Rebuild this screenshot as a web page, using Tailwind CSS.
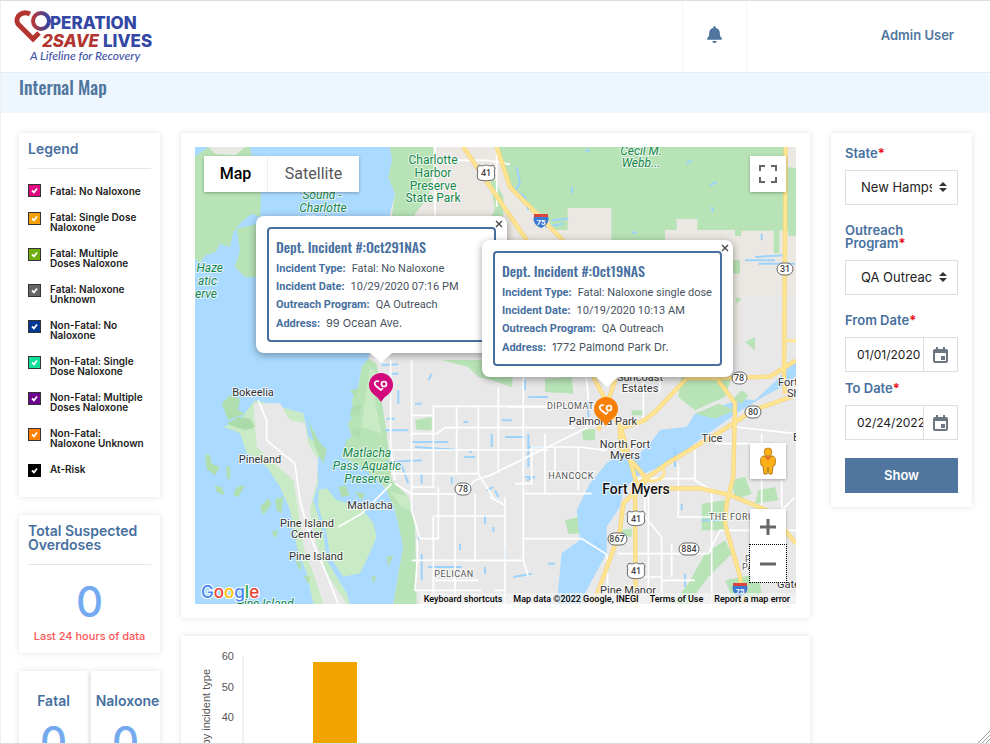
<!DOCTYPE html>
<html lang="en">
<head>
    <meta charset="UTF-8">
    <meta name="viewport" content="width=device-width, initial-scale=1.0">
    <title>Internal Map - Operation 2 Save Lives</title>
    <script src="https://cdn.jsdelivr.net/npm/@tailwindcss/browser@4"></script>
</head>
<body class="h-screen overflow-hidden bg-white font-[Inter,sans-serif] text-[#222]">
<div class="relative flex h-full flex-col overflow-hidden border-y border-l border-[#dcdcdc] border-l-[#f0f0f0]">
    <!-- Header -->
    <header class="flex h-[72px] shrink-0 items-stretch border-b border-[#e3ebf5]">
        <a href="#" class="block grow" aria-label="Operation 2 Save Lives">
            <svg class="h-[70px] w-[170px]" viewBox="0 0 170 70" font-family="Inter, sans-serif">
                <defs>
                    <linearGradient id="ring" x1="0" x2="1"><stop offset="0" stop-color="#b5383b"/><stop offset="1" stop-color="#3445a3"/></linearGradient>
                </defs>
                <path d="M29 13C21 9 13 16 17 23L32 38L38 32" fill="none" stroke="#b23530" stroke-width="5"/>
                <circle cx="40" cy="20" r="8" fill="none" stroke="url(#ring)" stroke-width="4"/>
                <text x="49" y="28" font-size="17" font-weight="800" fill="#3347a5">PERATION</text>
                <text x="41" y="46" font-size="17" font-weight="800" font-style="italic" fill="#b23530">2SAVE</text>
                <text x="102" y="46" font-size="17" font-weight="800" fill="#3347a5">LIVES</text>
                <text x="29" y="59" font-size="12" font-style="italic" font-weight="500" font-family="Lato, sans-serif" fill="#3f53a8">A Lifeline for Recovery</text>
            </svg>
        </a>
        <button class="flex w-[65px] items-center justify-center border-x border-[#f6f6f6] pb-1" aria-label="Notifications">
            <svg class="h-[17px] w-[15px]" viewBox="0 0 448 512" fill="#50769f"><path d="M224 512c35 0 64-29 64-64H160c0 35 29 64 64 64zm215-150c-19-21-55-52-55-154 0-78-54-140-128-155V32a32 32 0 0 0-64 0v21C118 68 64 130 64 208c0 102-36 133-55 154-6 6-9 14-9 22 0 16 13 32 32 32h384c19 0 32-16 32-32 0-8-3-16-9-22z"/></svg>
        </button>
        <div class="flex w-[243px] items-center justify-end pr-9 pb-[2px]">
            <a href="#" class="text-[13px] font-semibold text-[#50769f]">Admin User</a>
        </div>
    </header>

    <div class="h-10 shrink-0 bg-[#eef6fe] pl-[18px]">
        <h1 class="font-['Oswald','Liberation_Sans_Narrow','Roboto',sans-serif] text-[18px] leading-[29px] font-medium text-[#50769f]">Internal Map</h1>
    </div>

    <main class="grid grow grid-cols-[141px_1fr_141px] items-start gap-[21px] pt-5 pr-[18px] pl-[18px]">
        <!-- Left column -->
        <div class="flex flex-col gap-[18px]">
            <section class="h-[364px] bg-white px-[9px] pt-[7px] shadow-[0_0_6px_rgba(0,0,0,0.12)]">
                <h2 class="border-b border-[#e6e6e6] pb-[10px] text-[14px] leading-[18px] font-semibold text-[#47709f]">Legend</h2>
                <div class="mt-[15px] flex flex-col gap-4 text-[10px] leading-[10px] font-semibold">
                    <label class="flex gap-[9px]"><span class="relative h-[10px] w-[13px] shrink-0"><input type="checkbox" checked class="block size-[13px] appearance-none border border-[#333] bg-[#e2087f]"><svg class="pointer-events-none absolute top-[3px] left-[3px] size-[7px]" viewBox="0 0 7 7"><path d="M1 3.5L3 5.5L6 1.5" fill="none" stroke="#fff" stroke-width="1.8"/></svg></span><span class="pt-[2px] whitespace-nowrap">Fatal: No Naloxone</span></label>
                    <label class="flex gap-[9px]"><span class="relative h-[13px] w-[13px] shrink-0"><input type="checkbox" checked class="block size-[13px] appearance-none border border-[#333] bg-[#f5a000]"><svg class="pointer-events-none absolute top-[3px] left-[3px] size-[7px]" viewBox="0 0 7 7"><path d="M1 3.5L3 5.5L6 1.5" fill="none" stroke="#fff" stroke-width="1.8"/></svg></span><span class="whitespace-nowrap">Fatal: Single Dose<br>Naloxone</span></label>
                    <label class="flex gap-[9px]"><span class="relative h-[13px] w-[13px] shrink-0"><input type="checkbox" checked class="block size-[13px] appearance-none border border-[#333] bg-[#6fae0c]"><svg class="pointer-events-none absolute top-[3px] left-[3px] size-[7px]" viewBox="0 0 7 7"><path d="M1 3.5L3 5.5L6 1.5" fill="none" stroke="#fff" stroke-width="1.8"/></svg></span><span class="whitespace-nowrap">Fatal: Multiple<br>Doses Naloxone</span></label>
                    <label class="flex gap-[9px]"><span class="relative h-[13px] w-[13px] shrink-0"><input type="checkbox" checked class="block size-[13px] appearance-none border border-[#333] bg-[#666]"><svg class="pointer-events-none absolute top-[3px] left-[3px] size-[7px]" viewBox="0 0 7 7"><path d="M1 3.5L3 5.5L6 1.5" fill="none" stroke="#fff" stroke-width="1.8"/></svg></span><span class="whitespace-nowrap">Fatal: Naloxone<br>Unknown</span></label>
                    <label class="flex gap-[9px]"><span class="relative h-[13px] w-[13px] shrink-0"><input type="checkbox" checked class="block size-[13px] appearance-none border border-[#333] bg-[#003893]"><svg class="pointer-events-none absolute top-[3px] left-[3px] size-[7px]" viewBox="0 0 7 7"><path d="M1 3.5L3 5.5L6 1.5" fill="none" stroke="#fff" stroke-width="1.8"/></svg></span><span class="whitespace-nowrap">Non-Fatal: No<br>Naloxone</span></label>
                    <label class="flex gap-[9px]"><span class="relative h-[13px] w-[13px] shrink-0"><input type="checkbox" checked class="block size-[13px] appearance-none border border-[#333] bg-[#0fdf97]"><svg class="pointer-events-none absolute top-[3px] left-[3px] size-[7px]" viewBox="0 0 7 7"><path d="M1 3.5L3 5.5L6 1.5" fill="none" stroke="#fff" stroke-width="1.8"/></svg></span><span class="whitespace-nowrap">Non-Fatal: Single<br>Dose Naloxone</span></label>
                    <label class="flex gap-[9px]"><span class="relative h-[13px] w-[13px] shrink-0"><input type="checkbox" checked class="block size-[13px] appearance-none border border-[#333] bg-[#6f0391]"><svg class="pointer-events-none absolute top-[3px] left-[3px] size-[7px]" viewBox="0 0 7 7"><path d="M1 3.5L3 5.5L6 1.5" fill="none" stroke="#fff" stroke-width="1.8"/></svg></span><span class="whitespace-nowrap">Non-Fatal: Multiple<br>Doses Naloxone</span></label>
                    <label class="flex gap-[9px]"><span class="relative h-[13px] w-[13px] shrink-0"><input type="checkbox" checked class="block size-[13px] appearance-none border border-[#333] bg-[#ff8000]"><svg class="pointer-events-none absolute top-[3px] left-[3px] size-[7px]" viewBox="0 0 7 7"><path d="M1 3.5L3 5.5L6 1.5" fill="none" stroke="#fff" stroke-width="1.8"/></svg></span><span class="whitespace-nowrap">Non-Fatal:<br>Naloxone Unknown</span></label>
                    <label class="flex gap-[9px]"><span class="relative h-[13px] w-[13px] shrink-0"><input type="checkbox" checked class="block size-[13px] appearance-none border border-black bg-black"><svg class="pointer-events-none absolute top-[3px] left-[3px] size-[7px]" viewBox="0 0 7 7"><path d="M1 3.5L3 5.5L6 1.5" fill="none" stroke="#fff" stroke-width="1.8"/></svg></span><span class="whitespace-nowrap">At-Risk</span></label>
                </div>
            </section>

            <section class="h-[138px] bg-white px-[9px] pt-[9px] text-center shadow-[0_0_6px_rgba(0,0,0,0.12)]">
                <h2 class="border-b border-[#e6e6e6] pb-3 text-left text-[14px] leading-[14px] font-semibold text-[#47709f]">Total Suspected Overdoses</h2>
                <p class="mt-4 text-[42px] leading-[42px] font-medium text-[#74aaf0]">0</p>
                <p class="mt-[6px] text-[11px] leading-[14px] font-medium whitespace-nowrap text-[#fb5558]">Last 24 hours of data</p>
            </section>

            <div class="grid grid-cols-2 gap-[3px] text-center">
                <section class="h-[138px] bg-white pt-[21px] shadow-[0_0_6px_rgba(0,0,0,0.12)]">
                    <h2 class="text-[14px] leading-[18px] font-semibold text-[#47709f]">Fatal</h2>
                    <p class="mt-[11px] text-[42px] leading-[42px] font-medium text-[#74aaf0]">0</p>
                </section>
                <section class="h-[138px] bg-white pt-[21px] shadow-[0_0_6px_rgba(0,0,0,0.12)]">
                    <h2 class="pl-1 text-[14px] leading-[18px] font-semibold text-[#47709f]">Naloxone</h2>
                    <p class="mt-[11px] text-[42px] leading-[42px] font-medium text-[#74aaf0]">0</p>
                </section>
            </div>
        </div>

        <!-- Map and chart -->
        <div class="flex min-w-0 flex-col gap-[18px]">
            <section class="bg-white p-[14px] shadow-[0_0_6px_rgba(0,0,0,0.12)]">
                <div class="relative h-[457px] overflow-hidden bg-[#e8e8e8] font-[Roboto,sans-serif]">
                    <!-- Terrain and roads -->
                    <svg class="absolute inset-0 size-full" viewBox="0 0 1803 1371" preserveAspectRatio="xMinYMin slice">
                        <rect width="1803" height="1371" fill="#e8e8e8"/>
                        <path d="M640 0H1803V450H1640V600H880V300H640Z" fill="#ebe8e3"/>
                        <!-- sea -->
                        <path d="M0 0H585L592 40L580 90L600 140L585 200L560 400L520 640L500 660L490 720L470 760L480 800L460 830L470 870L455 900L490 940L540 990L575 1030L590 1060L610 1130L625 1200L610 1280L595 1371H0Z" fill="#aadaff"/>
                        <!-- shoreline preserves -->
                        <g fill="#b7e3b6">
                            <path d="M585 0H715V60L700 150L660 200L640 270H560L590 210L600 140L580 90L592 40Z"/>
                            <path d="M520 635L545 650L560 760L575 860L590 1000L640 1050L660 1130L665 1371H595L610 1280L625 1200L600 1090L570 1020L500 960L440 930L455 880L470 870L458 830L480 800L470 760L490 720L500 660Z"/>
                            <path d="M0 30L40 0H165L180 70L198 130L196 210L170 200L140 225L115 255L105 300L75 290L62 315L30 325L15 350L0 335Z"/>
                            <path d="M125 245L190 230V390L150 390L120 360L135 310Z"/>
                            <path d="M905 0L945 120L1060 220L1080 249H975V249H1118V183H1249V280H1410V249H1445V216H1507V249H1620V267H1638V251H1736V319H1753V251H1780V267H1803V64L1775 60V0Z"/>
                            <path d="M740 639H960L950 720L890 700L850 690L820 660ZM1050 695L1130 690L1135 740L1050 735ZM660 820L710 810V850L665 848ZM1460 680L1540 665L1610 690L1590 750L1500 790L1450 750ZM1520 1070L1590 1060V1150H1520ZM1480 1310L1530 1220L1590 1180L1610 1220L1540 1290L1480 1371H1430ZM1110 1120L1150 1110L1155 1160H1120ZM1690 1030L1740 1020L1750 1060L1680 1070ZM1160 850L1200 845V880H1165ZM1310 790H1345V805H1310ZM1270 1150L1310 1145V1170L1270 1165ZM1610 1000L1650 990L1670 1040L1620 1060Z"/>
                            <path d="M880 60L925 150V240H870L900 190ZM1610 340H1635V380L1615 380ZM1620 450L1640 455L1625 470ZM1650 585L1680 570V610ZM1590 1300L1690 1280L1700 1340L1620 1371Z"/>
                        </g>
                        <path d="M40 0H150L120 25L60 20Z" fill="#e8e8e3"/>
                        <path d="M525 660L545 680L540 760L560 860L500 840L510 760Z" fill="#c8eac5"/>
                        <path d="M585 1033L640 1050L650 1095L620 1080Z" fill="#c8eac5"/>
                        <!-- islands -->
                        <path d="M370 1029L395 1024L425 1059L495 1079L535 1129L545 1169L515 1239L495 1279L445 1289L405 1229L395 1159L370 1079Z" fill="#c8eac5"/>
                        <path d="M85 839L130 825L180 760L255 779L325 799L340 869L385 909L365 939L370 1009L355 1059L385 1159L395 1239L455 1339L465 1371H355L335 1279L305 1199L285 1089L255 1019L215 959L155 919L135 859Z" fill="#c8eac5"/>
                        <path d="M95 830L130 810L165 815L180 840L150 850Z" fill="#aadba9"/>
                        <path d="M175 769L255 769L285 819L330 829L340 889L370 939L365 1009L345 1089L355 1159L395 1279L455 1371H385L355 1279L325 1199L310 1089L295 999L225 939L185 899Z" fill="#e8e8e8"/>
                        <g fill="#b0deae">
                            <path d="M80 770L105 745L135 755L130 790L150 800L100 820ZM30 920L45 925L50 950L75 960L60 985L35 965ZM95 955L105 960V1000L95 990ZM60 1015L80 1020L90 1045L65 1035ZM125 1020L150 1015L130 1050L115 1045ZM195 1080L220 1055L230 1070L205 1105ZM240 1055L265 1050L260 1100L245 1090ZM230 1155L250 1150L240 1175ZM340 820L365 870L380 895L395 905L385 950L360 900ZM575 1230L595 1225L580 1260ZM530 1290L545 1285L535 1310ZM470 780L500 770L495 800L465 810ZM475 840L500 850L490 875L470 860ZM465 730L490 725L480 750Z"/>
                            <path d="M430 1020L450 1015L465 1045L440 1050ZM480 1035L510 1040L500 1060ZM325 1285L345 1290L340 1310ZM300 1235L320 1250L315 1275Z"/>
                        </g>
                        <!-- river -->
                        <path d="M1085 1371L1100 1219L1155 1179L1145 1089L1185 1009L1235 949L1275 919L1325 929L1365 889L1395 849L1475 839L1500 800L1585 775L1640 755L1680 760L1745 699L1803 640V689L1760 720L1705 749L1625 799L1525 869L1475 909L1395 959L1325 989L1285 1029L1275 1079L1235 1139V1219L1175 1329L1160 1371Z" fill="#aadaff"/>
                        <path d="M1500 800L1570 770L1620 790L1560 815ZM1610 760L1640 730L1660 745L1640 770Z" fill="#b7e3b6"/>
                        <!-- ponds and canals -->
                        <g stroke="#9dd3fb" stroke-width="6" fill="none">
                            <path d="M965 60L975 110L960 130L990 150L1000 190M1070 220L1120 215M1050 240L1105 230M1650 340H1740M1680 330L1770 325M1690 350H1800M1700 260V280M1545 115L1565 105M1475 50L1490 40M1310 255L1325 258M1170 10L1185 12M1550 180L1555 195M1130 120L1132 140"/>
                            <path d="M560 655L610 652M585 680H610M610 730V770M660 770H680M575 815H600M570 850H640M650 885H760M660 900L780 908M575 945L680 940M590 960L620 955L640 1010M680 980V1010M770 990V1010M805 825H820M808 930H840M822 915H830M870 1105V1130M875 1030L895 1020M795 1190V1210M672 1160V1180M680 1220V1300M700 1260H800M870 1260V1280M895 1140V1155M700 700L710 680M890 860V900M920 820H950M990 700V730M1000 900H1050M990 990H1020L995 1000M1000 750H1060M900 1030L910 1050M930 870H990M1000 860V960M1460 1070V1090M1470 1280V1320M1440 900V960M1520 1120H1570M1180 760V810M1200 1180L1215 1200M1060 1250H1080M930 1200V1240M955 1290L1010 1280"/>
                        </g>
                        <!-- local streets -->
                        <g stroke="#fff" stroke-width="5" fill="none">
                            <path d="M720 0V270M720 40H880L945 52M905 10V180"/>
                            <path d="M587 640V900L600 1000M650 640V1090L675 1175H730V1020M650 805H715V778H1180M650 860H725L750 842H1140M587 909H1060M587 980H850M715 778V1020H650M600 1010L650 1040L800 1041L840 1000L900 980M785 778V980M850 778V980L900 1060M910 720V980M985 640V1240M720 1107H930M840 1040V1240M780 1040V1371M715 1107V1371M930 1050V1371M650 1240H900M667 1175V1240L660 1330H860M985 1040H1190M885 1050L930 1075V1371M720 1300H850M900 1330H930M985 1175H1160L1235 1222M885 1240H985L1000 1290M1050 1040V860M1150 900V1030"/>
                            <path d="M590 1010L560 1040L500 1100L430 1140M190 760L215 820V880L300 950L315 1060L330 1115L350 1180L390 1270L430 1371"/>
                            <path d="M885 985L1180 840M940 780H1120M1170 640L1180 760L1240 840M1350 690H1270M1345 690V830M1395 640V730M1350 1030V1110L1400 1170V1371M1360 1030V1340M1320 995H1500M1450 950V1110H1700M1500 890V1000L1550 1030V1371M1270 1220H1540L1575 1150H1803M1400 1300H1500M1620 840L1803 860M1560 890H1700M1700 860V1130M1760 1000V1150M1430 1190V1290M1240 1371L1235 1222M1800 1050L1760 1090M960 1010H1010V900H1150L1235 910M1080 1000V900M1320 1290H1400"/>
                        </g>
                        <!-- highways -->
                        <g fill="none" stroke-linejoin="round">
                            <g stroke="#f6d37a" stroke-width="13">
                                <path d="M905 0L945 120L1100 275L1260 700L1210 850M805 0L995 280M1772 0L1767 700L1770 740M1195 690L1280 850L1325 1010M1275 845L1345 822L1385 790L1475 694H1565L1725 689L1803 640M1325 1015L1415 950L1575 855L1675 790L1803 744M1565 694L1620 769L1615 989L1595 1069L1590 1129L1635 1289L1645 1371M1370 1024H1515L1605 1044L1725 1094L1803 1190M1320 1029L1322 1371M1355 999L1285 1069L1275 1149L1255 1209L1195 1371M1275 840V900L1350 990"/>
                            </g>
                            <g stroke="#ffe591" stroke-width="9">
                                <path d="M905 0L945 120L1100 275L1260 700L1210 850M805 0L995 280M1772 0L1767 700L1770 740M1195 690L1280 850L1325 1010M1275 845L1345 822L1385 790L1475 694H1565L1725 689L1803 640M1325 1015L1415 950L1575 855L1675 790L1803 744M1565 694L1620 769L1615 989L1595 1069L1590 1129L1635 1289L1645 1371M1370 1024H1515L1605 1044L1725 1094L1803 1190M1320 1029L1322 1371M1355 999L1285 1069L1275 1149L1255 1209L1195 1371M1275 840V900L1350 990"/>
                            </g>
                            <path d="M1350 1000C1400 1010 1420 980 1400 960M1767 581H1803" stroke="#ffe591" stroke-width="9"/>
                        </g>
                    </svg>

                    <!-- Labels, shields and pins -->
                    <svg class="absolute inset-0 size-full" viewBox="0 0 601 457" preserveAspectRatio="xMinYMin slice" font-family="Roboto, sans-serif" font-size="11" text-anchor="middle">
                        <g fill="#16874a" stroke="#fff" stroke-width="2" stroke-opacity="0.7" paint-order="stroke" font-size="12">
                            <text x="238" y="17">Charlotte</text><text x="238" y="30">Harbor</text><text x="238" y="43">Preserve</text><text x="238" y="55">State Park</text>
                            <g font-style="italic">
                                <text x="127" y="52">Sound -</text><text x="128" y="65">Charlotte</text><text x="128" y="78">Harbor</text>
                                <g text-anchor="end"><text x="28" y="125">Haze</text><text x="22" y="138">atic</text><text x="22" y="151">erve</text></g>
                                <text x="446" y="8">Cecil M.</text><text x="446" y="20">Webb...</text>
                                <text x="172" y="310">Matlacha</text><text x="172" y="323">Pass Aquatic</text><text x="172" y="336">Preserve</text>
                                <text x="70" y="461">Pine Island</text>
                            </g>
                        </g>
                        <g fill="#333" stroke="#fff" stroke-width="2" stroke-opacity="0.8" paint-order="stroke">
                            <text x="58" y="249">Bokeelia</text>
                            <text x="65" y="316">Pineland</text>
                            <text x="175" y="362">Matlacha</text>
                            <text x="112" y="380">Pine Island</text><text x="112" y="391">Center</text>
                            <text x="121" y="413">Pine Island</text>
                            <text x="445" y="234">Suncoast</text><text x="445" y="245">Estates</text>
                            <text x="408" y="278">Palmona Park</text>
                            <text x="430" y="301">North Fort</text><text x="430" y="312">Myers</text>
                            <text x="517" y="295">Tice</text>
                            <text x="433" y="447">Pine Manor</text>
                            <g text-anchor="start"><text x="583" y="239">Fort</text><text x="592" y="250">Sh</text><text x="598" y="294">E</text><text x="582" y="441">Gate</text></g>
                            <text x="441" y="347" font-size="14" font-weight="500" fill="#111">Fort Myers</text>
                            <g class="tracking-wider" font-size="9" fill="#555">
                                <text x="259" y="430">PELICAN</text><text x="376" y="332">HANCOCK</text>
                                <g text-anchor="start"><text x="352" y="262">DIPLOMAT</text><text x="514" y="373">THE FORU</text><text x="550" y="415">P</text><text x="547" y="423">PA</text></g>
                            </g>
                        </g>
                        <g fill="#fff" stroke="#666">
                            <path d="M284 18C287 20 289 18 291 18C293 18 295 20 298 18L300 21C298 25 301 28 299 32C297 34 293 33 291 34C289 33 285 34 283 32C281 28 284 25 282 21Z"/>
                            <path d="M434 364C437 366 439 364 441 364C443 364 445 366 448 364L450 367C448 371 451 373 449 376C447 379 443 378 441 379C439 378 435 379 433 376C431 373 434 371 432 367Z"/>
                            <path d="M434 416C437 418 439 416 441 416C443 416 445 418 448 416L450 419C448 423 451 426 449 429C447 432 443 431 441 432C439 431 435 432 433 429C431 426 434 423 432 419Z"/>
                            <rect x="582" y="116" width="16" height="12" rx="6"/>
                            <rect x="260" y="336" width="16" height="12" rx="6"/>
                            <rect x="537" y="225" width="15" height="12" rx="6"/>
                            <rect x="550" y="259" width="16" height="12" rx="6"/>
                            <rect x="413" y="386" width="19" height="12" rx="6"/>
                            <rect x="484" y="396" width="20" height="12" rx="6"/>
                        </g>
                        <g fill="#444" font-size="9" font-weight="500">
                            <text x="291" y="29">41</text><text x="441" y="375">41</text><text x="441" y="427">41</text>
                            <text x="590" y="125">31</text><text x="268" y="345">78</text><text x="544" y="234">78</text><text x="558" y="268">80</text><text x="422" y="395">867</text><text x="494" y="405">884</text>
                        </g>
                        <path d="M339 69H353C355 76 350 79 346 81C342 79 337 76 339 69Z" fill="#3b78d0"/><path d="M339 67H353V70H339Z" fill="#d9453c"/>
                        <path d="M538 438H552C554 445 549 448 545 450C541 448 536 445 538 438Z" fill="#3b78d0"/><path d="M538 436H552V439H538Z" fill="#d9453c"/>
                        <g fill="#fff" font-size="8" font-weight="700"><text x="346" y="78">75</text><text x="545" y="447">75</text></g>
                        <g stroke-linejoin="round">
                            <path d="M186 226A12 12 0 0 1 198 238C198 245 192 248 189 251L186 255L183 251C180 248 174 245 174 238A12 12 0 0 1 186 226Z" fill="#d20a7c"/>
                            <path d="M184 234.500C181 233 178 236 181 239L186 243L188 241" fill="none" stroke="#fff" stroke-width="1.700"/><circle cx="189" cy="237" r="2.500" fill="none" stroke="#fff" stroke-width="1.700"/>
                            <path d="M411 250A12 12 0 0 1 423 262C423 269 417 272 414 275L411 279L408 275C405 272 399 269 399 262A12 12 0 0 1 411 250Z" fill="#f98006"/>
                            <path d="M409 258.500C406 257 403 260 406 263L411 267L413 265" fill="none" stroke="#fff" stroke-width="1.700"/><circle cx="414" cy="261" r="2.500" fill="none" stroke="#fff" stroke-width="1.700"/>
                        </g>
                        <text x="6" y="451" text-anchor="start" font-family="Inter, sans-serif" font-size="17" font-weight="500" stroke="#fff" stroke-width="2" paint-order="stroke"><tspan fill="#4285f4">G</tspan><tspan fill="#ea4335">o</tspan><tspan fill="#fbbc05">o</tspan><tspan fill="#4285f4">g</tspan><tspan fill="#34a853">l</tspan><tspan fill="#ea4335">e</tspan></text>
                    </svg>

                    <!-- Info windows -->
                    <div class="absolute top-[69px] left-[61px] w-[251px] rounded-lg bg-white p-[11px] shadow-[0_2px_7px_1px_rgba(0,0,0,0.3)]">
                        <div class="h-[115px] rounded border-2 border-[#47709f] px-[7px] pt-2 text-[11px] leading-[18px] whitespace-nowrap text-[#47525e]">
                            <h3 class="mb-[3px] font-['Oswald','Liberation_Sans_Narrow','Roboto',sans-serif] text-[14px] leading-[20px] font-medium text-[#47709f]">Dept. Incident #:Oct291NAS</h3>
                            <p><b class="mr-[6px] font-bold text-[#47709f]">Incident Type:</b>Fatal: No Naloxone</p>
                            <p><b class="mr-[6px] font-bold text-[#47709f]">Incident Date:</b>10/29/2020 07:16 PM</p>
                            <p><b class="mr-[6px] font-bold text-[#47709f]">Outreach Program:</b>QA Outreach</p>
                            <p><b class="mr-[6px] font-bold text-[#47709f]">Address:</b><span class="font-[Inter,sans-serif]">99 Ocean Ave.</span></p>
                        </div>
                        <button class="absolute top-[4px] right-[4px] size-2" aria-label="Close"><svg viewBox="0 0 8 8"><path d="M1 1L7 7M7 1L1 7" stroke="#444" stroke-width="1.3"/></svg></button>
                        <svg class="absolute top-full left-[114px] h-[10px] w-[22px]" viewBox="0 0 22 10"><path d="M0 0H22L11 10Z" fill="#fff"/></svg>
                    </div>
                    <div class="absolute top-[93px] left-[287px] w-[251px] rounded-lg bg-white p-[11px] shadow-[0_2px_7px_1px_rgba(0,0,0,0.3)]">
                        <div class="h-[115px] rounded border-2 border-[#47709f] px-[7px] pt-2 text-[11px] leading-[18px] whitespace-nowrap text-[#47525e]">
                            <h3 class="mb-[3px] font-['Oswald','Liberation_Sans_Narrow','Roboto',sans-serif] text-[14px] leading-[20px] font-medium text-[#47709f]">Dept. Incident #:Oct19NAS</h3>
                            <p><b class="mr-[6px] font-bold text-[#47709f]">Incident Type:</b>Fatal: Naloxone single dose</p>
                            <p><b class="mr-[6px] font-bold text-[#47709f]">Incident Date:</b>10/19/2020 10:13 AM</p>
                            <p><b class="mr-[6px] font-bold text-[#47709f]">Outreach Program:</b>QA Outreach</p>
                            <p><b class="mr-[6px] font-bold text-[#47709f]">Address:</b><span class="font-[Inter,sans-serif]">1772 Palmond Park Dr.</span></p>
                        </div>
                        <button class="absolute top-[4px] right-[4px] size-2" aria-label="Close"><svg viewBox="0 0 8 8"><path d="M1 1L7 7M7 1L1 7" stroke="#444" stroke-width="1.3"/></svg></button>
                        <svg class="absolute top-full left-[114px] h-[10px] w-[22px]" viewBox="0 0 22 10"><path d="M0 0H22L11 10Z" fill="#fff"/></svg>
                    </div>

                    <!-- Map controls -->
                    <div class="absolute top-[9px] left-[9px] flex h-9 bg-white text-[16px] shadow-[0_1px_3px_rgba(0,0,0,0.3)]">
                        <button class="w-[64px] border-r border-[#eee] font-medium text-black">Map</button>
                        <button class="w-[91px] text-[#565656]">Satellite</button>
                    </div>
                    <button class="absolute top-[9px] right-[10px] flex size-9 items-center justify-center bg-white shadow-[0_1px_3px_rgba(0,0,0,0.3)]" aria-label="Toggle fullscreen view">
                        <svg class="size-[18px]" viewBox="0 0 18 18" fill="#666"><path d="M0 0h6v2H2v4H0zM12 0h6v6h-2V2h-4zM0 12h2v4h4v2H0zM16 12h2v6h-6v-2h4z"/></svg>
                    </button>
                    <div class="absolute right-[10px] bottom-[22px] flex flex-col">
                        <button class="mb-[30px] flex size-9 items-center justify-center bg-white shadow-[0_1px_3px_rgba(0,0,0,0.3)]" aria-label="Street View">
                            <svg class="h-[28px] w-4" viewBox="0 0 16 28"><path d="M4 9H12C15 9 16 12 15 18L13 19L12 27H9L8 20L7 27H4L3 19L1 18C0 12 1 9 4 9Z" fill="#fbb016" stroke="#b87d1b"/><circle cx="8" cy="5" r="4" fill="#fbb016" stroke="#c98c20"/><path d="M4 9H12L8 14Z" fill="#e0792a"/></svg>
                        </button>
                        <button class="flex size-9 items-center justify-center bg-white shadow-[0_1px_3px_rgba(0,0,0,0.3)]" aria-label="Zoom in">
                            <svg class="size-[18px]" viewBox="0 0 18 18"><path d="M1 9H17M9 1V17" stroke="#666" stroke-width="3"/></svg>
                        </button>
                        <button class="flex h-[37px] w-9 items-center justify-center bg-white outline-1 outline-dotted outline-black" aria-label="Zoom out">
                            <svg class="size-[18px]" viewBox="0 0 18 18"><path d="M1 9H17" stroke="#666" stroke-width="3"/></svg>
                        </button>
                    </div>
                    <div class="absolute right-0 bottom-0 flex h-[11px] gap-[11px] bg-[#f5f5f5]/70 pr-[6px] pl-1 text-[9px] leading-[12px] font-medium whitespace-nowrap text-black">
                        <button>Keyboard shortcuts</button>
                        <span>Map data ©2022 Google, INEGI</span>
                        <a href="#">Terms of Use</a>
                        <a href="#">Report a map error</a>
                    </div>
                </div>
            </section>

            <section class="bg-white shadow-[0_0_6px_rgba(0,0,0,0.12)]">
                <svg class="h-[240px] w-full" viewBox="0 0 629 240" preserveAspectRatio="xMinYMin meet" font-family="Liberation Sans, sans-serif" font-size="11" fill="#555">
                    <path d="M62 20V204" stroke="#e3e3e3"/>
                    <g text-anchor="end"><text x="53" y="24">60</text><text x="53" y="55">50</text><text x="53" y="85">40</text><text x="53" y="116">30</text></g>
                    <text transform="translate(29 33) rotate(-90)" text-anchor="end">by incident type</text>
                    <rect x="132" y="26" width="44" height="178" fill="#f2a400"/>
                </svg>
            </section>
        </div>

        <!-- Filters -->
        <form class="bg-white p-[14px] pt-[13px] text-[13px] font-semibold text-[#47709f] shadow-[0_0_6px_rgba(0,0,0,0.12)]">
            <label for="state" class="block leading-[14px]">State<span class="text-red-600">*</span></label>
            <div class="relative mt-[10px]">
                <select id="state" class="block h-[35px] w-full appearance-none border border-[#dedede] bg-white pr-[25px] pl-[15px] text-[13px] font-normal text-[#222]"><option>New Hampshire</option></select>
                <svg class="pointer-events-none absolute top-[12px] right-[11px] h-[10px] w-2" viewBox="0 0 8 10" fill="#333"><path d="M4 0L8 4H0ZM0 6H8L4 10Z"/></svg>
            </div>
            <label for="program" class="mt-[19px] block leading-[13px]">Outreach<br>Program<span class="text-red-600">*</span></label>
            <div class="relative mt-[10px]">
                <select id="program" class="block h-[35px] w-full appearance-none border border-[#dedede] bg-white pr-[25px] pl-[15px] text-[13px] font-normal text-[#222]"><option>QA Outreach</option></select>
                <svg class="pointer-events-none absolute top-[12px] right-[11px] h-[10px] w-2" viewBox="0 0 8 10" fill="#333"><path d="M4 0L8 4H0ZM0 6H8L4 10Z"/></svg>
            </div>
            <label for="from" class="mt-[18px] block leading-[14px]">From Date<span class="text-red-600">*</span></label>
            <div class="mt-[10px] flex h-[35px] border border-[#dedede]">
                <input id="from" type="text" value="01/01/2020" class="w-full min-w-0 grow pl-[11px] text-[12px] font-normal text-[#222]">
                <button type="button" class="flex w-[34px] shrink-0 items-center justify-center border-l border-[#dedede]" aria-label="Pick from date"><svg class="h-4 w-[15px]" viewBox="0 0 15 16" fill="#6c7681"><path fill-rule="evenodd" d="M3 0h2v2h5V0h2v2h1a2 2 0 0 1 2 2v10a2 2 0 0 1-2 2H2a2 2 0 0 1-2-2V4a2 2 0 0 1 2-2h1zM2 6v8h11V6zM8 9h4v4H8z"/></svg></button>
            </div>
            <label for="to" class="mt-[9px] block leading-[14px]">To Date<span class="text-red-600">*</span></label>
            <div class="mt-[10px] flex h-[35px] border border-[#dedede]">
                <input id="to" type="text" value="02/24/2022" class="w-full min-w-0 grow pl-[11px] text-[12px] font-normal text-[#222]">
                <button type="button" class="flex w-[34px] shrink-0 items-center justify-center border-l border-[#dedede]" aria-label="Pick to date"><svg class="h-4 w-[15px]" viewBox="0 0 15 16" fill="#6c7681"><path fill-rule="evenodd" d="M3 0h2v2h5V0h2v2h1a2 2 0 0 1 2 2v10a2 2 0 0 1-2 2H2a2 2 0 0 1-2-2V4a2 2 0 0 1 2-2h1zM2 6v8h11V6zM8 9h4v4H8z"/></svg></button>
            </div>
            <button type="button" class="mt-[18px] block h-[35px] w-full bg-[#50769f] text-[13px] font-semibold text-white">Show</button>
        </form>
    </main>

    <svg class="absolute right-0 bottom-0 size-3" viewBox="0 0 12 12"><path d="M0 12L12 0M4 12L12 4M8 12L12 8" stroke="#999"/></svg>
</div>
</body>
</html>
